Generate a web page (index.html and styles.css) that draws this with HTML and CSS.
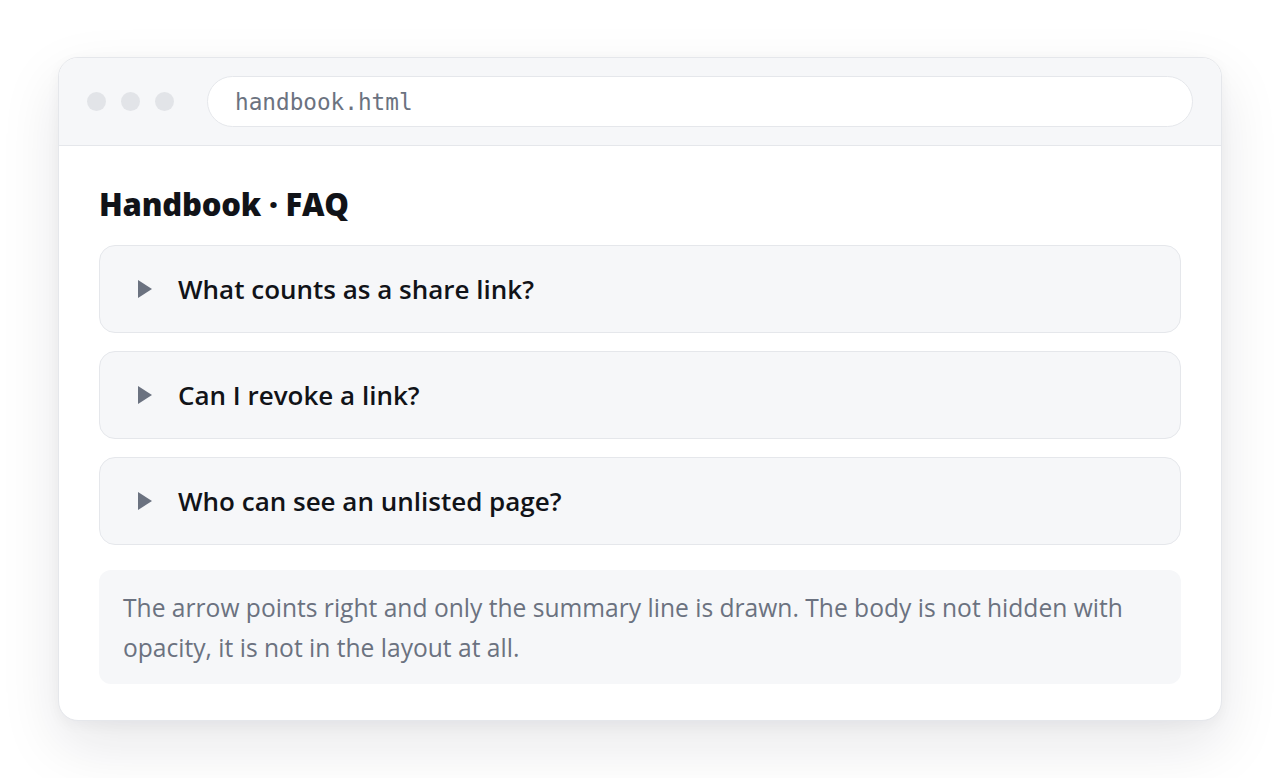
FILE: index.html
```html
<!DOCTYPE html>
<html lang="en">
<head>
<meta charset="utf-8">
<title>Handbook · FAQ</title>
<link rel="stylesheet" href="styles.css">
</head>
<body>
<div class="stage">
  <div class="window">
    <div class="titlebar">
      <div class="dots">
        <span class="dot"></span><span class="dot"></span><span class="dot"></span>
      </div>
      <div class="address">handbook.html</div>
    </div>
    <div class="content">
      <h1 class="title">Handbook · FAQ</h1>
      <div class="faq">
        <details class="item"><summary class="summary"><span class="arrow"></span>What counts as a share link?</summary><p>A share link is a URL that opens the page.</p></details>
        <details class="item"><summary class="summary"><span class="arrow"></span>Can I revoke a link?</summary><p>Yes.</p></details>
        <details class="item"><summary class="summary"><span class="arrow"></span>Who can see an unlisted page?</summary><p>Anyone with the link.</p></details>
      </div>
      <p class="note">The arrow points right and only the summary line is drawn. The body is not hidden with opacity, it is not in the layout at all.</p>
    </div>
  </div>
</div>
</body>
</html>
```
FILE: styles.css
```css
* { box-sizing: border-box; }
html, body { margin: 0; padding: 0; }
body {
  background: #ffffff;
  font-family: "Open Sans", "Noto Sans", sans-serif;
  color: #111827;
}
.stage {
  width: 1280px;
  height: 778px;
  display: flex;
  align-items: center;
  justify-content: center;
}
.window {
  width: 1164px;
  height: 664px;
  background: #ffffff;
  border: 1px solid #e5e7eb;
  border-radius: 20px;
  box-shadow: 0 24px 60px rgba(15, 23, 42, 0.10), 0 4px 14px rgba(15, 23, 42, 0.04);
  overflow: hidden;
  display: flex;
  flex-direction: column;
}
.titlebar {
  height: 88px;
  flex: none;
  background: #f6f7f9;
  border-bottom: 1px solid #e5e7eb;
  display: flex;
  align-items: center;
  padding: 0 28px 0 28px;
  gap: 33px;
}
.dots { display: flex; gap: 15px; }
.dot {
  width: 19px;
  height: 19px;
  border-radius: 50%;
  background: #e2e4e8;
}
.address {
  flex: 1;
  height: 51px;
  background: #ffffff;
  border: 1px solid #e5e7eb;
  border-radius: 26px;
  display: flex;
  align-items: center;
  padding-left: 27px;
  font-family: "DejaVu Sans Mono", "Liberation Mono", monospace;
  font-size: 22.7px;
  color: #6b7280;
}
.content {
  padding: 38px 40px 35px;
  display: flex;
  flex-direction: column;
}
.title {
  margin: 0 0 21px;
  font-family: "Open Sans", "Noto Sans", sans-serif;
  font-weight: 800;
  font-size: 31px;
  line-height: 40px;
  letter-spacing: -0.2px;
  color: #111318;
}
.faq { display: flex; flex-direction: column; gap: 18px; }
.item {
  background: #f6f7f9;
  border: 1px solid #e5e7eb;
  border-radius: 16px;
}
.item p { margin: 0; padding: 0 24px 24px 78px; }
.summary {
  list-style: none;
  display: flex;
  align-items: center;
  height: 86px;
  padding-left: 38px;
  font-size: 26px;
  font-weight: 600;
  color: #111318;
  cursor: pointer;
}
.summary::-webkit-details-marker { display: none; }
.arrow {
  flex: none;
  width: 0;
  height: 0;
  border-top: 9px solid transparent;
  border-bottom: 9px solid transparent;
  border-left: 14px solid #6b7280;
  margin-right: 26px;
}
.note {
  margin: 25px 0 0;
  background: #f6f7f9;
  border-radius: 12px;
  padding: 18px 24px 16px;
  font-size: 24.6px;
  line-height: 40px;
  color: #6b7280;
}
```
